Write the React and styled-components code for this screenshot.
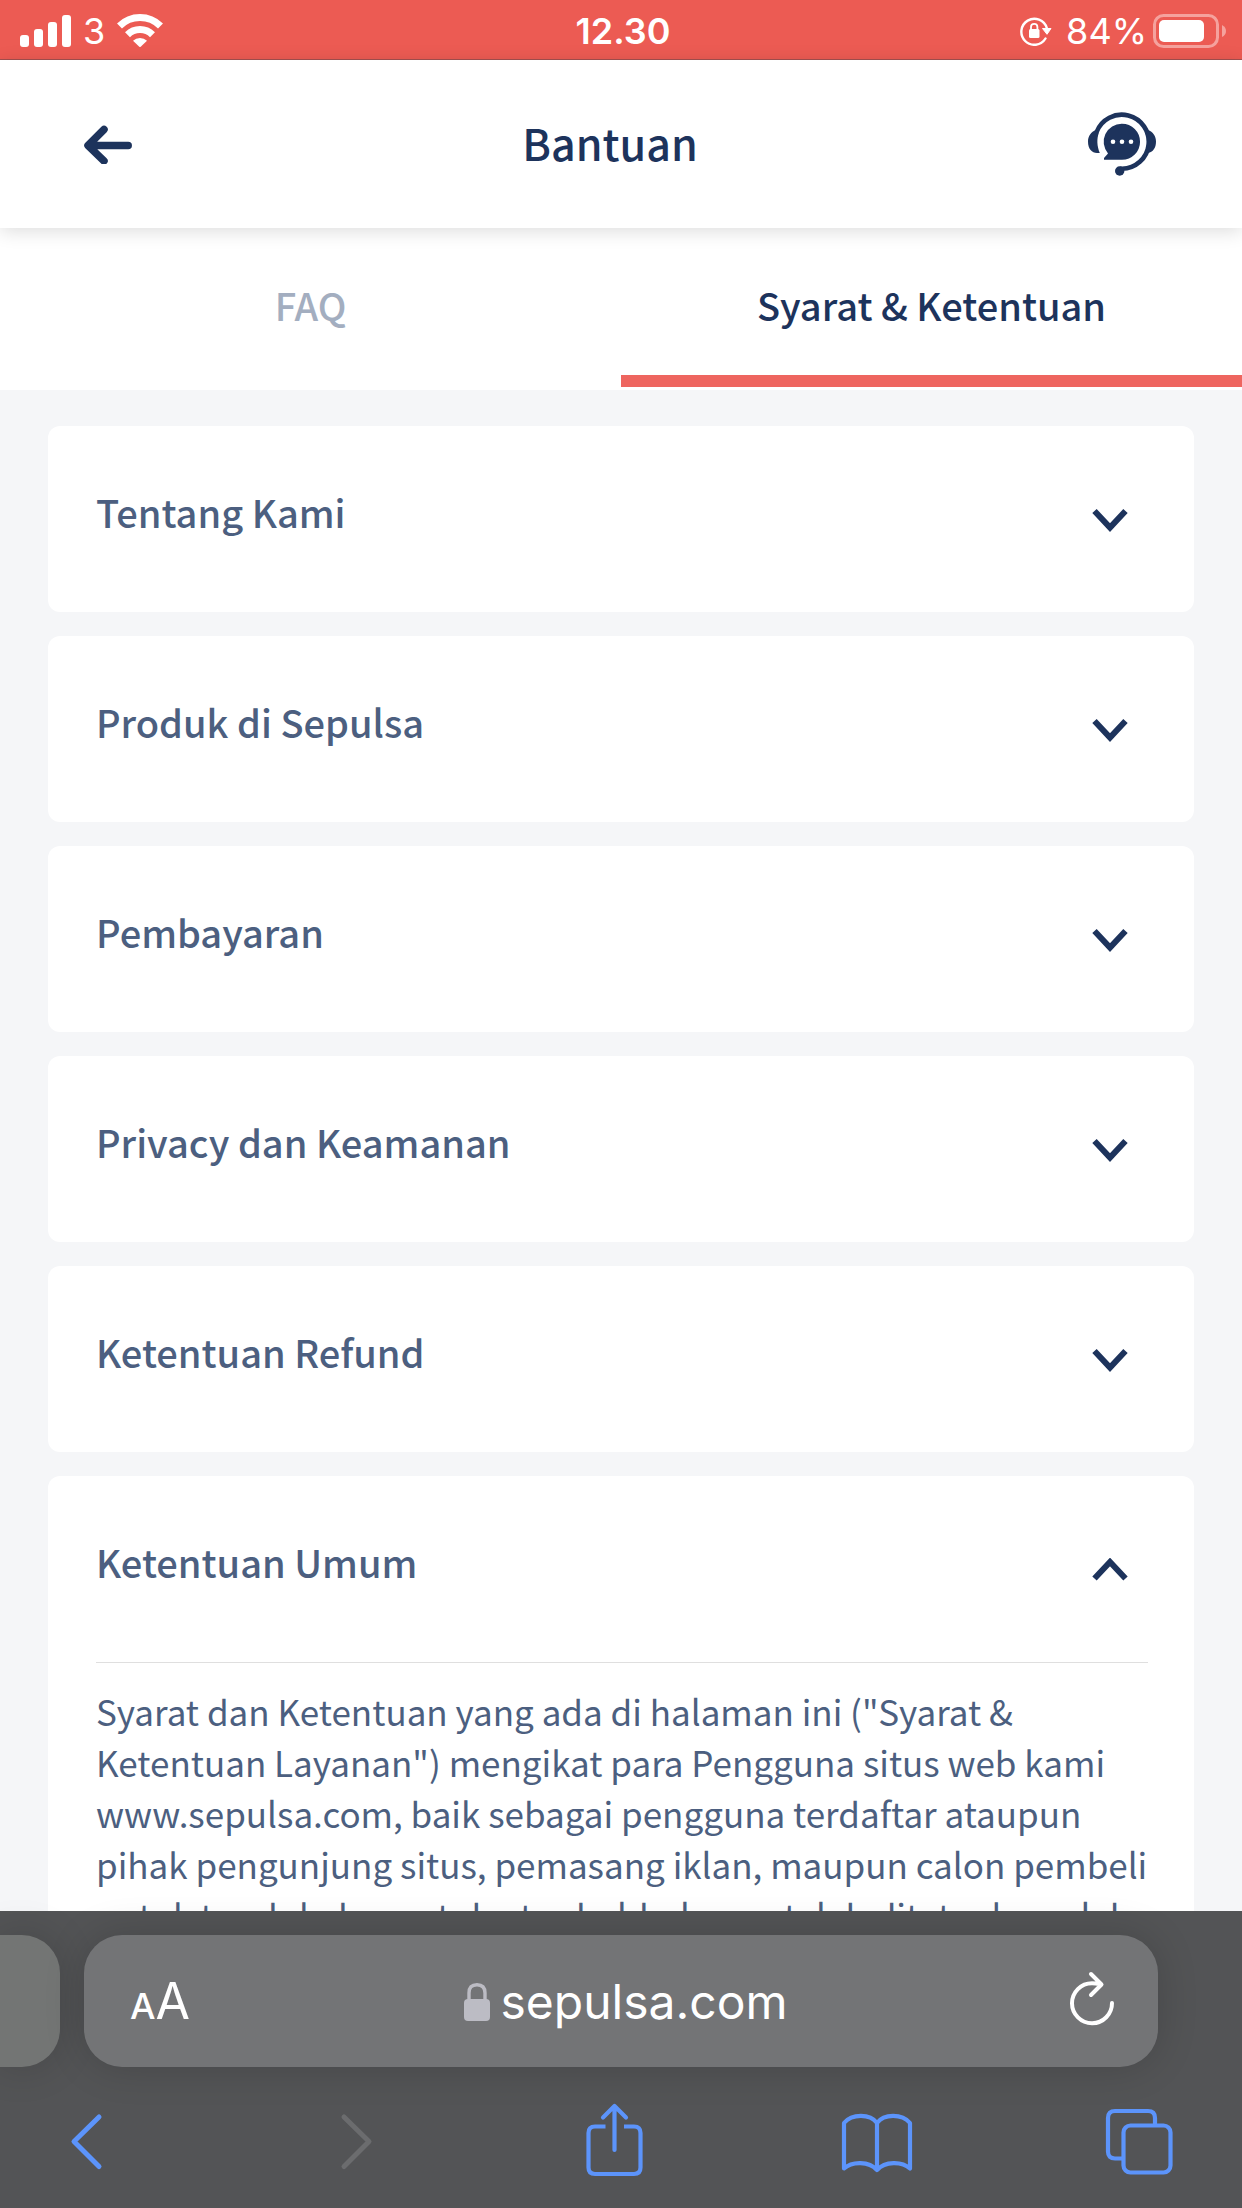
import React, { useState } from "react";
import styled, { createGlobalStyle } from "styled-components";

const navy = "#1d335c";
const slate = "#4c5f80";
const blue = "#5c94fb";
const sans = `"Noto Sans CJK SC", "Noto Sans", sans-serif`;
const system = `Inter, "Liberation Sans", sans-serif`;

const GlobalStyle = createGlobalStyle`
  *, *::before, *::after { box-sizing: border-box; }
  body { margin: 0; background: #f5f6f8; font-family: ${sans}; }
  button { border: 0; padding: 0; margin: 0; background: none; font: inherit; color: inherit; cursor: pointer; }
  svg { display: block; flex: none; }
`;

const Screen = styled.div`
  display: flex;
  flex-direction: column;
  height: 100vh;
  overflow: hidden;
`;

const StatusBar = styled.div`
  display: grid;
  grid-template-columns: 1fr auto 1fr;
  align-items: center;
  flex: none;
  height: 60px;
  padding: 2px 16px 0 20px;
  border-bottom: 1px solid #a4504f;
  background: #ec5b53;
  color: #fff;
  font-family: ${system};
  font-size: 36px;
  line-height: 44px;
`;

const StatusGroup = styled.div`
  display: flex;
  align-items: center;
  justify-content: ${(p) => (p.$end ? "flex-end" : "flex-start")};
  gap: ${(p) => (p.$end ? "6px" : "12px")};
`;

const Clock = styled.time`
  font-weight: 600;
`;

const Percent = styled.span`
  margin-left: 8px;
`;

const Header = styled.header`
  position: relative;
  z-index: 1;
  display: flex;
  align-items: center;
  justify-content: space-between;
  flex: none;
  height: 168px;
  padding: 0 86px 0 84px;
  background: #fff;
  box-shadow: 0 3px 18px rgba(0, 0, 0, 0.14);
`;

const PageTitle = styled.h1`
  margin: 0;
  padding-bottom: 4px;
  color: ${navy};
  font-size: 43px;
  line-height: 64px;
  font-weight: 500;
`;

const Tabs = styled.div`
  display: grid;
  grid-template-columns: 1fr 1fr;
  flex: none;
  padding-bottom: 3px;
  background: #fff;
`;

const Tab = styled.button`
  && {
    height: 159px;
    padding-top: 6px;
    border-bottom: 12px solid ${(p) => (p.$active ? "#ee655f" : "transparent")};
    color: ${(p) => (p.$active ? navy : "#a3aec0")};
    font-size: 38px;
    line-height: 56px;
    font-weight: 500;
  }
`;

const Content = styled.main`
  display: flex;
  flex-direction: column;
  flex: 1;
  gap: 24px;
  min-height: 0;
  padding: 36px 48px 0;
  overflow: hidden;
`;

const Card = styled.section`
  flex: none;
  padding: 0 46px 0 48px;
  border-radius: 12px;
  background: #fff;
`;

const CardHeading = styled.h2`
  margin: 0;
  color: ${slate};
  font-size: 38px;
  line-height: 56px;
  font-weight: 500;
`;

const CardToggle = styled.button`
  && {
    display: flex;
    align-items: center;
    justify-content: space-between;
    width: 100%;
    height: 186px;
    padding: 2px 20px 0 0;
    text-align: left;
  }
`;

const CardTitle = styled.span`
  padding-bottom: 16px;
`;

const CardBody = styled.p`
  margin: 0;
  padding: 22px 0 48px;
  border-top: 1px solid #dfdfdf;
  color: ${slate};
  font-size: 35px;
  line-height: 51px;
`;

const Browser = styled.footer`
  flex: none;
  padding-top: 24px;
  background: #535456;
`;

const AddressRow = styled.div`
  display: flex;
  gap: 24px;
  padding-right: 84px;
`;

const PreviousTab = styled.div`
  flex: none;
  width: 60px;
  height: 132px;
  border-radius: 0 38px 38px 0;
  background: #737574;
  box-shadow: 0 0 40px rgba(0, 0, 0, 0.16);
`;

const AddressBar = styled.div`
  display: grid;
  grid-template-columns: 1fr auto 1fr;
  align-items: center;
  flex: 1;
  height: 132px;
  padding: 0 42px 0 46px;
  border-radius: 38px;
  background: #737476;
  box-shadow: 0 0 40px rgba(0, 0, 0, 0.16);
  color: #fff;
  font-family: ${system};
  font-size: 48px;
  line-height: 64px;
`;

const TextSize = styled.button`
  && {
    display: flex;
    align-items: baseline;
    justify-self: start;
    padding-top: 4px;
    font-size: 50px;
  }
`;

const SmallLetter = styled.span`
  font-size: 36px;
  font-weight: 500;
`;

const Address = styled.button`
  && {
    display: flex;
    align-items: center;
    gap: 10px;
    padding: 2px 0 0 6px;
  }
`;

const Reload = styled.button`
  && {
    justify-self: end;
    padding-bottom: 6px;
  }
`;

const Toolbar = styled.nav`
  display: flex;
  justify-content: space-between;
  padding: 35px 64px 30px 48px;
`;

const icon = (d) => ({ fill: "none", stroke: d, strokeLinecap: "round", strokeLinejoin: "round" });

const Signal = () => (
  <svg width="51" height="32" viewBox="0 0 51 32" fill="#fff" aria-hidden="true">
    <rect x="0" y="20" width="9" height="12" rx="3" />
    <rect x="14" y="14" width="9" height="18" rx="3" />
    <rect x="28" y="7" width="9" height="25" rx="3" />
    <rect x="42" y="0" width="9" height="32" rx="3" />
  </svg>
);

const Wifi = () => (
  <svg width="46" height="34" viewBox="0 0 46 34" aria-hidden="true">
    <g fill="none" stroke="#fff" strokeWidth="7">
      <path d="M2.500 12A29 29 0 0 1 43.500 12" />
      <path d="M10.500 20.700A17.700 17.700 0 0 1 35.500 20.700" />
    </g>
    <path fill="#fff" d="M16 26.800A10 10 0 0 1 30 26.800L23.700 32.700Q23 33.300 22.300 32.700Z" />
  </svg>
);

const RotationLock = () => (
  <svg width="32" height="30" viewBox="0 0 32 30" aria-hidden="true">
    <path d="M25.500 22.500A13 13 0 1 1 26.800 12" fill="none" stroke="#fff" strokeWidth="2.400" strokeLinecap="round" />
    <path d="M22.500 12.500H31L27 18.300Z" fill="#fff" stroke="#fff" strokeLinejoin="round" />
    <rect x="9" y="13" width="10.500" height="9" rx="1.500" fill="#fff" />
    <path d="M11 14V11Q11 7.800 14.200 7.800T17.400 11V14" fill="none" stroke="#fff" strokeWidth="1.800" />
  </svg>
);

const Battery = () => (
  <svg width="73" height="34" viewBox="0 0 73 34" aria-hidden="true">
    <rect x="1.500" y="1.500" width="63" height="31" rx="9" fill="none" stroke="#f5a29d" strokeWidth="3" />
    <rect x="6" y="6" width="45" height="22" rx="5" fill="#fff" />
    <path d="M69 11Q73 13 73 17T69 23Z" fill="#f5a29d" />
  </svg>
);

const ArrowLeft = () => (
  <svg width="48" height="40" viewBox="0 0 48 40" {...icon(navy)} strokeWidth="7.500" aria-hidden="true">
    <path d="M44.200 21.500H6M20 5.500L4 21.500L20 37" />
  </svg>
);

const Headset = () => (
  <svg width="68" height="64" viewBox="0 0 68 64" aria-hidden="true">
    <path d="M8.600 20A27 27 0 1 1 34 56.700H32" fill="none" stroke={navy} strokeWidth="4.600" />
    <path d="M8 18C3 20 0 24 0 29.500C0 37 4 41 9 41H11.800C9 34 8.500 27 11 20.500Z" fill={navy} />
    <path d="M60 18C65 20 68 24 68 29.500C68 36 65 40 60 41L57.500 39C59.500 33 59.500 26 57 20.500Z" fill={navy} />
    <circle cx="31.700" cy="59" r="4.700" fill={navy} />
    <path d="M34 11.700A18 18 0 0 1 34 47.800H16V46L20 41.400A18 18 0 0 1 34 11.700Z" fill={navy} />
    <g fill="#fff">
      <circle cx="25" cy="29.700" r="2.300" />
      <circle cx="34" cy="29.700" r="2.300" />
      <circle cx="43" cy="29.700" r="2.300" />
    </g>
  </svg>
);

const Chevron = ({ open }) => (
  <svg width="36" height="24" viewBox="0 0 36 24" fill="none" stroke={navy} strokeWidth="6" aria-hidden="true">
    <path d={open ? "M2.500 20.500L18 4L33.500 20.500" : "M2.500 3L18 19.500L33.500 3"} />
  </svg>
);

const Padlock = () => (
  <svg width="26" height="38" viewBox="0 0 26 38" aria-hidden="true">
    <rect y="16" width="26" height="22" rx="4" fill="#bcbcc4" />
    <path d="M5 17V10Q5 1.700 13 1.700T21 10V17" fill="none" stroke="#bcbcc4" strokeWidth="3.400" />
  </svg>
);

const ReloadIcon = () => (
  <svg width="48" height="60" viewBox="0 0 48 60" {...icon("#fff")} strokeWidth="4" aria-hidden="true">
    <path d="M44 35A20 20 0 1 1 24 15.200Q28 15.200 31 16M23 6L33.500 16.500L23 27" />
  </svg>
);

const ToolIcon = ({ children, color = blue, width = 4.2 }) => (
  <svg width="76" height="76" viewBox="0 0 76 76" {...icon(color)} strokeWidth={width} aria-hidden="true">
    {children}
  </svg>
);

const sections = [
  "Tentang Kami",
  "Produk di Sepulsa",
  "Pembayaran",
  "Privacy dan Keamanan",
  "Ketentuan Refund",
  "Ketentuan Umum",
];

const terms =
  'Syarat dan Ketentuan yang ada di halaman ini ("Syarat & Ketentuan Layanan") mengikat para Pengguna situs web kami www.sepulsa.com, baik sebagai pengguna terdaftar ataupun pihak pengunjung situs, pemasang iklan, maupun calon pembeli untuk tunduk dan patuh atas hal-hal yang telah ditetapkan oleh';

export default function App() {
  const [tab, setTab] = useState(1);
  const [open, setOpen] = useState(5);

  return (
    <Screen>
      <GlobalStyle />
      <StatusBar>
        <StatusGroup>
          <Signal />
          <span>3</span>
          <Wifi />
        </StatusGroup>
        <Clock>12.30</Clock>
        <StatusGroup $end>
          <RotationLock />
          <Percent>84%</Percent>
          <Battery />
        </StatusGroup>
      </StatusBar>
      <Header>
        <button aria-label="Kembali"><ArrowLeft /></button>
        <PageTitle>Bantuan</PageTitle>
        <button aria-label="Hubungi kami"><Headset /></button>
      </Header>
      <Tabs role="tablist">
        {["FAQ", "Syarat & Ketentuan"].map((label, i) => (
          <Tab key={label} role="tab" aria-selected={tab === i} $active={tab === i} onClick={() => setTab(i)}>
            {label}
          </Tab>
        ))}
      </Tabs>
      <Content>
        {sections.map((title, i) => (
          <Card key={title}>
            <CardHeading>
              <CardToggle aria-expanded={open === i} onClick={() => setOpen(open === i ? -1 : i)}>
                <CardTitle>{title}</CardTitle>
                <Chevron open={open === i} />
              </CardToggle>
            </CardHeading>
            {open === i && <CardBody>{terms}</CardBody>}
          </Card>
        ))}
      </Content>
      <Browser>
        <AddressRow>
          <PreviousTab />
          <AddressBar>
            <TextSize aria-label="Ukuran teks"><SmallLetter>A</SmallLetter><span>A</span></TextSize>
            <Address><Padlock />sepulsa.com</Address>
            <Reload aria-label="Muat ulang"><ReloadIcon /></Reload>
          </AddressBar>
        </AddressRow>
        <Toolbar>
          <button aria-label="Mundur">
            <ToolIcon width={5}><path d="M51 15L26 39.500L51 64.500" /></ToolIcon>
          </button>
          <button aria-label="Maju">
            <ToolIcon width={5} color="#6b6c6e"><path d="M32 15L57 39.500L32 64.500" /></ToolIcon>
          </button>
          <button aria-label="Bagikan">
            <ToolIcon>
              <path d="M39.500 48V5M28 15.500L39.500 4L51 15.500" />
              <path strokeLinecap="butt" d="M30.500 24.500H20Q13.500 24.500 13.500 31V65.500Q13.500 72 20 72H59Q65.500 72 65.500 65.500V31Q65.500 24.500 59 24.500H49" />
            </ToolIcon>
          </button>
          <button aria-label="Markah">
            <ToolIcon>
              <path d="M38 21C31 11.500 13 11.500 5 21V66.500C13 59 30 59 38 68C46 59 63 59 71 66.500V21C63 11.500 45 11.500 38 21V68" />
            </ToolIcon>
          </button>
          <button aria-label="Tab">
            <ToolIcon>
              <rect x="21.500" y="23.500" width="47" height="47" rx="7" />
              <path strokeLinecap="butt" d="M21.500 56.500H13Q6 56.500 6 49.500V16Q6 9 13 9H46Q53 9 53 16V23.500" />
            </ToolIcon>
          </button>
        </Toolbar>
      </Browser>
    </Screen>
  );
}
